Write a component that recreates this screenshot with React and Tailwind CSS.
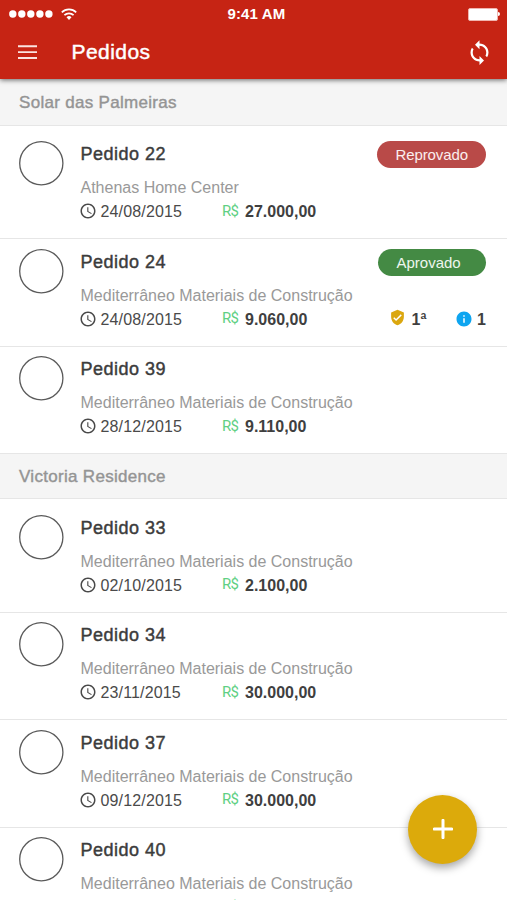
import { MdAccessTime, MdInfo, MdSync, MdVerifiedUser } from "react-icons/md";

const sections = [
  {
    name: "Solar das Palmeiras",
    orders: [
      { id: 22, vendor: "Athenas Home Center", date: "24/08/2015", value: "27.000,00", status: "Reprovado" },
      { id: 24, vendor: "Mediterrâneo Materiais de Construção", date: "24/08/2015", value: "9.060,00", status: "Aprovado", level: "1ª", notes: "1" },
      { id: 39, vendor: "Mediterrâneo Materiais de Construção", date: "28/12/2015", value: "9.110,00" },
    ],
  },
  {
    name: "Victoria Residence",
    orders: [
      { id: 33, vendor: "Mediterrâneo Materiais de Construção", date: "02/10/2015", value: "2.100,00" },
      { id: 34, vendor: "Mediterrâneo Materiais de Construção", date: "23/11/2015", value: "30.000,00" },
      { id: 37, vendor: "Mediterrâneo Materiais de Construção", date: "09/12/2015", value: "30.000,00" },
      { id: 40, vendor: "Mediterrâneo Materiais de Construção" },
    ],
  },
];

function StatusBar() {
  return (
    <div className="flex h-7 items-center justify-between pr-[7px] pl-[9px]">
      <div className="flex w-40 items-center">
        <svg className="h-2 w-[44px]" viewBox="0 0 44 8" fill="white">
          <circle cx="3.8" cy="4" r="3.7" />
          <circle cx="12.8" cy="4" r="3.7" />
          <circle cx="21.8" cy="4" r="3.7" />
          <circle cx="30.9" cy="4" r="3.7" />
          <circle cx="39.9" cy="4" r="3.7" />
        </svg>
        <svg className="ml-2 h-3 w-4" viewBox="0 0 16 12" fill="none" stroke="white" strokeWidth="1.7">
          <path d="M0.8 4.4a10.2 10.2 0 0 1 14.4 0" />
          <path d="M3.4 7.2a6.5 6.5 0 0 1 9.2 0" />
          <path d="M8 12L5.5 9.3a3.5 3.5 0 0 1 5 0z" fill="white" stroke="none" />
        </svg>
      </div>
      <span className="-mt-px ml-1 text-[15px] leading-5 font-bold tracking-[0.15px]">9:41 AM</span>
      <div className="flex w-40 items-center justify-end">
        <span className="h-[13px] w-[30px] rounded-[2px] border border-[#f0b5af] bg-white" />
        <span className="h-1 w-[2px] rounded-r-full bg-white" />
      </div>
    </div>
  );
}

function Order({ order }) {
  const approved = order.status === "Aprovado";
  return (
    <li className="flex h-[107.5px] items-start border-b border-[#e6e6e6] pt-[9.5px] pr-[21px] pl-[19px]">
      <svg className="size-[45px] shrink-0" viewBox="0 0 45 45" fill="none" stroke="#5a5a5a" strokeWidth="1.3">
        <circle cx="22.3" cy="22.3" r="21.6" />
      </svg>
      <div className="ml-[16.5px] min-w-0 flex-1">
        <div className="flex h-[35px] items-start justify-between">
          <h3 className="pt-px text-[18px] leading-[25px] tracking-[0.5px] text-[#3c3c3c] [-webkit-text-stroke:0.45px_#3c3c3c]">
            Pedido {order.id}
          </h3>
          {order.status && (
            <span
              className={
                approved
                  ? "h-[27px] w-[108px] rounded-full bg-[#448a44] pl-[18.5px] text-[15px] leading-[27px] text-[#eef6ee]"
                  : "h-[27px] w-[109px] rounded-full bg-[#b94a48] pl-[18.5px] text-[15px] leading-[27px] tracking-[-0.1px] text-[#fbeeee]"
              }
            >
              {order.status}
            </span>
          )}
        </div>
        <p className="h-6 text-[16px] leading-6 whitespace-nowrap text-[#999]">{order.vendor}</p>
        <div className="flex h-6 items-center text-[16px] leading-6 text-[#4a4a4a]">
          {order.date && (
            <>
              <MdAccessTime className="-mt-[2px] -ml-[2px] size-[18px]" />
              <span className="ml-1 w-[121.5px] tracking-[0.15px]">{order.date}</span>
            </>
          )}
          <span
            className={
              (order.date ? "" : "ml-[141.5px]") +
              " -mt-[3px] w-[23px] font-['Roboto'] text-[15px] tracking-[-0.8px] text-[#5fd083]"
            }
          >
            R$
          </span>
          <b className="text-[#3f3f3f]">{order.value}</b>
          {order.level && (
            <div className="ml-auto flex items-center font-bold text-[#3f3f3f]">
              <MdVerifiedUser className="-mt-1 size-[17px] text-[#dba70f]" />
              <span className="ml-[6px] w-[43px]">{order.level}</span>
              <MdInfo className="-mt-[2px] size-[18px] text-[#0ea5f0]" />
              <span className="ml-[4.5px]">{order.notes}</span>
            </div>
          )}
        </div>
      </div>
    </li>
  );
}

export default function App() {
  return (
    <div className="relative h-[900px] w-[507px] overflow-hidden bg-white font-['Liberation_Sans',Arial,sans-serif]">
      <header className="relative z-10 h-[79px] bg-[#c62414] text-white shadow-[0_1px_5px_rgba(0,0,0,0.6)]">
        <StatusBar />
        <div className="flex h-[48px] items-center pr-[14px] pl-[18px]">
          <svg className="h-[14px] w-[19px]" viewBox="0 0 19 14" stroke="#fbe3e0" strokeWidth="1.9">
            <path d="M0 1.2h19M0 7.1h19M0 13h19" />
          </svg>
          <h1 className="ml-[34.5px] flex-1 text-[21px] leading-7 tracking-[0.45px] [-webkit-text-stroke:0.45px_white]">Pedidos</h1>
          <MdSync className="size-[27px]" />
        </div>
      </header>
      <main>
        {sections.map((section, index) => (
          <section key={section.name}>
            <h2
              className={
                (index === 0 ? "h-[47px] leading-[48px]" : "h-[45px] leading-[46px]") +
                " border-b border-[#e6e6e6] bg-[#f5f5f5] pl-[19px] text-[17px] tracking-[0.3px] text-[#949494] [-webkit-text-stroke:0.4px_#949494]"
              }
            >
              {section.name}
            </h2>
            <ul className={index === 0 ? "pt-[5.5px]" : "pt-[6px]"}>
              {section.orders.map((order) => (
                <Order key={order.id} order={order} />
              ))}
            </ul>
          </section>
        ))}
      </main>
      <button
        aria-label="Novo pedido"
        className="absolute right-[30px] bottom-[36px] z-20 flex size-[69px] items-center justify-center rounded-full bg-[#dcaa0b] pb-px shadow-[0_4px_8px_rgba(0,0,0,0.35)]"
      >
        <svg className="size-5" viewBox="0 0 20 20" stroke="white" strokeWidth="3" strokeLinecap="round">
          <path d="M10 1.3v17.4M1.3 10h17.4" />
        </svg>
      </button>
    </div>
  );
}
